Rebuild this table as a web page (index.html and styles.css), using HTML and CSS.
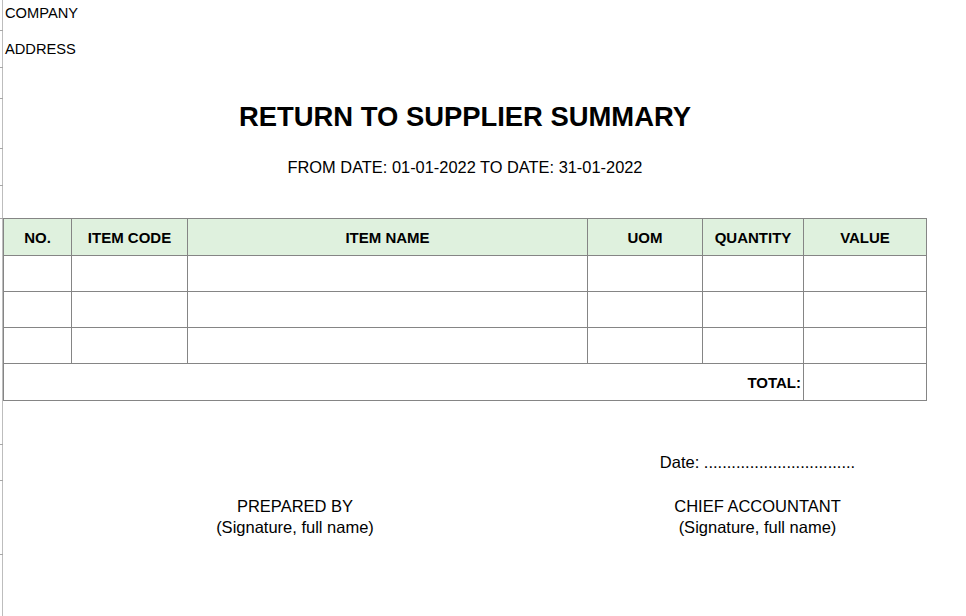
FILE: index.html
```html
<!DOCTYPE html>
<html lang="en">
<head>
<meta charset="utf-8">
<title>Return to Supplier Summary</title>
<link rel="stylesheet" href="styles.css">
</head>
<body>
<div class="sheet">
  <div class="row r-company"><span class="cell-text">COMPANY</span></div>
  <div class="row r-address"><span class="cell-text">ADDRESS</span></div>
  <div class="row r-gap1"></div>
  <div class="row r-title"><h1 class="title">RETURN TO SUPPLIER SUMMARY</h1></div>
  <div class="row r-sub"><p class="subtitle">FROM DATE: 01-01-2022 TO DATE: 31-01-2022</p></div>
  <div class="row r-gap2"></div>
  <table class="grid">
    <colgroup>
      <col class="c-no"><col class="c-code"><col class="c-name"><col class="c-uom"><col class="c-qty"><col class="c-val">
    </colgroup>
    <thead>
      <tr class="head-row"><th>NO.</th><th>ITEM CODE</th><th>ITEM NAME</th><th>UOM</th><th>QUANTITY</th><th>VALUE</th></tr>
    </thead>
    <tbody>
      <tr class="body-row"><td></td><td></td><td></td><td></td><td></td><td></td></tr>
      <tr class="body-row"><td></td><td></td><td></td><td></td><td></td><td></td></tr>
      <tr class="body-row"><td></td><td></td><td></td><td></td><td></td><td></td></tr>
      <tr class="total-row"><td colspan="5" class="total-label">TOTAL:</td><td></td></tr>
    </tbody>
  </table>
  <div class="row r-gap3"></div>
  <div class="row r-date">
    <div class="sign-left"></div>
    <div class="sign-right">Date: .................................</div>
  </div>
  <div class="row r-sign">
    <div class="sign-left">PREPARED BY<br>(Signature, full name)</div>
    <div class="sign-right">CHIEF ACCOUNTANT<br>(Signature, full name)</div>
  </div>
</div>
</body>
</html>
```
FILE: styles.css
```css
html, body {
  margin: 0;
  padding: 0;
  background: #ffffff;
}
body {
  font-family: "Liberation Sans", Arial, sans-serif;
  color: #000000;
}
.sheet {
  margin-left: 2px;
  border-left: 1px solid #bdbdbd;
  min-height: 616px;
  width: 960px;
  box-sizing: border-box;
}
.row {
  position: relative;
  box-sizing: border-box;
}
.row::before {
  content: "";
  position: absolute;
  left: -3px;
  bottom: -1px;
  width: 3px;
  height: 1px;
  background: #a6a6a6;
}
.cell-text {
  font-size: 14.67px;
  line-height: 16px;
  padding-left: 2px;
}
.r-company { height: 30px; padding-top: 4px; }
.r-address { height: 37px; padding-top: 10px; }
.r-gap1 { height: 31px; }
.r-title {
  height: 50px;
  width: 924px;
  padding-top: 3px;
}
.title {
  margin: 0;
  font-size: 27.4px;
  line-height: 31px;
  font-weight: bold;
  text-align: center;
}
.r-sub {
  height: 37px;
  width: 924px;
  display: flex;
  align-items: center;
  justify-content: center;
}
.subtitle {
  margin: 0;
  font-size: 16.4px;
  line-height: 18px;
}
.r-gap2 { height: 33px; }

.grid {
  border-collapse: collapse;
  table-layout: fixed;
  width: 924px;
}
.c-no { width: 68px; }
.c-code { width: 116px; }
.c-name { width: 400px; }
.c-uom { width: 115px; }
.c-qty { width: 101px; }
.c-val { width: 123px; }
.grid th, .grid td {
  border: 1px solid #858585;
  padding: 0;
}
.grid th {
  background: #dff1de;
  font-size: 15px;
  font-weight: bold;
  text-align: center;
  height: 36px;
}
.body-row td { height: 35px; }
.total-row td { height: 36px; }
.total-label {
  text-align: right;
  font-weight: bold;
  font-size: 15px;
  padding-right: 2px !important;
}

.r-gap3 { height: 43px; }
.r-date, .r-sign {
  display: grid;
  grid-template-columns: 584px 339px;
  font-size: 16.5px;
  line-height: 21px;
  text-align: center;
}
.r-date { height: 36px; padding-top: 8px; }
.r-sign { height: 74px; padding-top: 16px; }
.sign-right { padding-left: 2px; }
```
